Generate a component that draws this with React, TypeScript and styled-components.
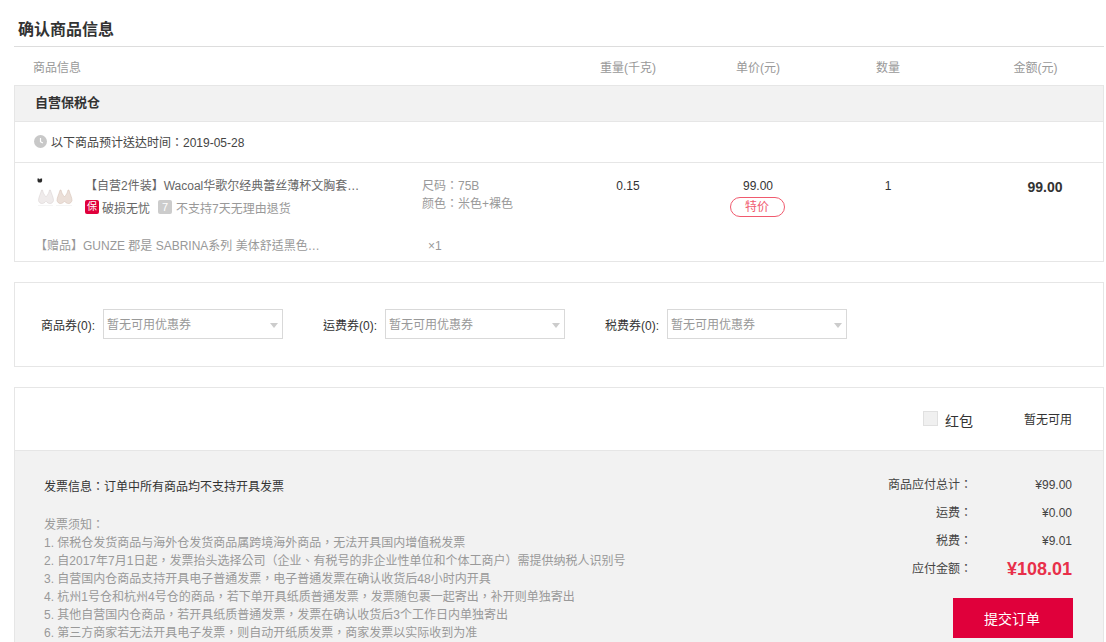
import React from "react";
import styled, { createGlobalStyle } from "styled-components";

const Global = createGlobalStyle`
  html, body { margin: 0; padding: 0; height: 100%; overflow: hidden; background: #fff; }
  body { font-family: "Liberation Sans", "Noto Sans CJK TC", sans-serif; font-size: 12px; color: #333; }
  * { box-sizing: border-box; }
`;

const Page = styled.main`
  width: 1090px;
  margin-left: 14px;
`;
const Title = styled.h2`
  margin: 0;
  height: 47px;
  padding: 19px 0 0 4px;
  font-size: 16px;
  line-height: 22px;
  font-weight: 700;
  color: #333;
  border-bottom: 1px solid #ddd;
`;
const Columns = styled.div`
  display: grid;
  grid-template-columns: 549px 130px 130px 130px 1fr;
  align-items: center;
`;
const HeadRow = styled(Columns)`
  height: 38px;
  color: #999;
`;
const HeadFirst = styled.span`
  padding-left: 19px;
`;
const HeadCell = styled.span<{ $shift?: number }>`
  text-align: center;
  padding-left: ${(p) => p.$shift ?? 0}px;
`;
const Card = styled.section`
  border: 1px solid #e6e6e6;
`;
const Warehouse = styled.div`
  height: 36px;
  background: #f2f2f2;
  padding-left: 20px;
  font-size: 13px;
  font-weight: 700;
  line-height: 33px;
  color: #333;
  border-bottom: 1px solid #e6e6e6;
`;
const Delivery = styled.div`
  height: 41px;
  display: flex;
  align-items: center;
  gap: 4px;
  padding: 0 0 1px 19px;
  color: #444;
  border-bottom: 1px solid #e6e6e6;
`;
const ProductRow = styled(Columns)`
  align-items: start;
  height: 62px;
  padding-top: 14px;
`;
const Goods = styled.div`
  display: flex;
  padding-left: 20px;
  height: 48px;
`;
const Thumb = styled.svg`
  width: 40px;
  height: 40px;
  flex: none;
  margin-top: -2px;
`;
const GoodsInfo = styled.div`
  width: 347px;
  padding-left: 10px;
`;
const GoodsName = styled.div`
  height: 18px;
  line-height: 18px;
  color: #666;
  white-space: nowrap;
`;
const TagRow = styled.div`
  display: flex;
  align-items: center;
  height: 14px;
  margin-top: 5px;
  color: #666;
`;
const SafeMark = styled.span`
  width: 14px;
  height: 14px;
  margin-right: 3px;
  border-radius: 2px;
  background: #e0003b;
  color: #fff;
  font-size: 10px;
  line-height: 14px;
  text-align: center;
`;
const NoReturnMark = styled.span`
  width: 14px;
  height: 14px;
  margin: 0 4px 0 8px;
  border-radius: 2px;
  background: #ccc;
  color: #fff;
  font-size: 11px;
  line-height: 14px;
  text-align: center;
`;
const Muted = styled.span`
  color: #999;
`;
const Sku = styled.div`
  color: #999;
  line-height: 18px;
  white-space: nowrap;
`;
const Value = styled.div`
  padding-right: 2px;
  text-align: center;
  line-height: 18px;
  color: #333;
`;
const SpecialTag = styled.div`
  width: 55px;
  height: 20px;
  margin: 2px auto 0;
  transform: translateX(-2px);
  border: 1px solid #f05a6e;
  border-radius: 10px;
  color: #f05a6e;
  line-height: 18px;
  text-align: center;
`;
const Total = styled.div`
  padding-left: 33px;
  text-align: center;
  font-size: 14px;
  font-weight: 700;
  line-height: 20px;
  color: #333;
`;
const GiftRow = styled.div`
  display: flex;
  height: 36px;
  padding: 12px 0 0 20px;
  line-height: 18px;
  color: #999;
`;
const GiftName = styled.div`
  width: 393px;
  white-space: nowrap;
`;
const CouponCard = styled(Card)`
  margin-top: 20px;
  height: 85px;
  display: flex;
  align-items: center;
  padding-left: 26px;
  padding-bottom: 1px;
`;
const Coupon = styled.div`
  width: 282px;
  display: flex;
  align-items: center;
  color: #333;
`;
const CouponLabel = styled.span`
  width: 62px;
  white-space: nowrap;
`;
const FakeSelect = styled.div`
  position: relative;
  width: 180px;
  height: 30px;
  padding-left: 3px;
  border: 1px solid #d9d9d9;
  line-height: 30px;
  color: #999;
  &::after {
    content: "";
    position: absolute;
    right: 4px;
    top: 13px;
    border-style: solid;
    border-width: 5px 4.5px 0;
    border-color: #ccc transparent transparent;
  }
`;
const SummaryCard = styled(Card)`
  margin-top: 20px;
`;
const PacketRow = styled.div`
  height: 63px;
  display: flex;
  align-items: center;
  justify-content: flex-end;
  padding: 0 31px 0 0;
  color: #333;
  border-bottom: 1px solid #e6e6e6;
`;
const Check = styled.span`
  width: 15px;
  height: 15px;
  margin-right: 7px;
  margin-bottom: 2px;
  border: 1px solid #e0e0e0;
  background: #f0f0f0;
`;
const PacketLabel = styled.span`
  width: 79px;
  font-size: 14px;
  line-height: 18px;
  padding-top: 4px;
`;
const PacketState = styled.span`
  margin-bottom: 2px;
`;
const Bottom = styled.div`
  display: flex;
  justify-content: space-between;
  height: 200px;
  background: #f2f2f2;
  padding: 25px 31px 0 29px;
`;
const InvoiceInfo = styled.div`
  line-height: 22px;
  color: #333;
`;
const Notes = styled.ol`
  list-style: none;
  margin: 18px 0 0;
  padding: 0;
  line-height: 18px;
  color: #999;
`;
const Side = styled.div`
  width: 190px;
  margin-top: -5px;
`;
const Line = styled.div`
  display: flex;
  justify-content: space-between;
  align-items: center;
  height: 28px;
  color: #444;
`;
const LineLabel = styled.span`
  width: 90px;
  margin-bottom: 4px;
  text-align: right;
  white-space: nowrap;
`;
const Grand = styled.span`
  font-size: 18px;
  font-weight: 700;
  color: #e8304a;
`;
const Submit = styled.button`
  display: block;
  width: 120px;
  height: 40px;
  margin: 15px -1px 0 auto;
  padding: 0 2px 0 0;
  border: 0;
  background: #e0003b;
  color: #fff;
  font: inherit;
  font-size: 14px;
`;

const notes = [
  "1. 保税仓发货商品与海外仓发货商品属跨境海外商品，无法开具国内增值税发票",
  "2. 自2017年7月1日起，发票抬头选择公司（企业、有税号的非企业性单位和个体工商户）需提供纳税人识别号",
  "3. 自营国内仓商品支持开具电子普通发票，电子普通发票在确认收货后48小时内开具",
  "4. 杭州1号仓和杭州4号仓的商品，若下单开具纸质普通发票，发票随包裹一起寄出，补开则单独寄出",
  "5. 其他自营国内仓商品，若开具纸质普通发票，发票在确认收货后3个工作日内单独寄出",
  "6. 第三方商家若无法开具电子发票，则自动开纸质发票，商家发票以实际收到为准",
];

const lines = [
  ["商品应付总计：", "¥99.00"],
  ["运费：", "¥0.00"],
  ["税费：", "¥9.01"],
];

const Clock = () => (
  <svg width="13" height="13" viewBox="0 0 13 13">
    <circle cx="6.5" cy="6.5" r="6.5" fill="#c8c8c8" />
    <path d="M6.5 3v3.7l2.4 1.4" fill="none" stroke="#fff" strokeWidth="1.2" />
  </svg>
);

const braShape =
  "M0 8.5C0 6 1.5 3.5 2.5 0L3.2 0C3.6 2.5 4.8 4 6 5.5C7.2 4 8.4 2.5 8.8 0L9.5 0C10.5 3.5 12 6 12 8.5C11 11.5 8 11.5 6 9C4 11.5 1 11.5 0 8.5Z";

const BraPhoto = () => (
  <Thumb viewBox="0 0 40 40">
    <path d="M2.5 3.5h1.5l.8 1 .8-1h1.5v2.8l-1 1.2H3.5l-1-1.2z" fill="#2b2b2b" />
    <g transform="translate(3.5 15) scale(1.25)">
      <path d={braShape} fill="#efebeb" stroke="#dcd5d5" strokeWidth="0.5" />
    </g>
    <g transform="translate(22 15) scale(1.25)">
      <path d={braShape} fill="#ebdfd8" stroke="#d9c6ba" strokeWidth="0.5" />
    </g>
    <rect x="3" y="30" width="15" height="1" fill="#f5f5f5" />
    <rect x="21" y="30" width="16" height="1" fill="#f5f5f5" />
  </Thumb>
);

export default function App() {
  return (
    <Page>
      <Global />
      <Title>确认商品信息</Title>
      <HeadRow>
        <HeadFirst>商品信息</HeadFirst>
        <HeadCell>重量(千克)</HeadCell>
        <HeadCell>单价(元)</HeadCell>
        <HeadCell>数量</HeadCell>
        <HeadCell $shift={14}>金额(元)</HeadCell>
      </HeadRow>
      <Card>
        <Warehouse>自营保税仓</Warehouse>
        <Delivery>
          <Clock />
          以下商品预计送达时间：2019-05-28
        </Delivery>
        <ProductRow>
          <Goods>
            <BraPhoto />
            <GoodsInfo>
              <GoodsName>【自营2件装】Wacoal华歌尔经典蕾丝薄杯文胸套…</GoodsName>
              <TagRow>
                <SafeMark>保</SafeMark>
                破损无忧
                <NoReturnMark>7</NoReturnMark>
                <Muted>不支持7天无理由退货</Muted>
              </TagRow>
            </GoodsInfo>
            <Sku>
              尺码：75B
              <br />
              颜色：米色+裸色
            </Sku>
          </Goods>
          <Value>0.15</Value>
          <div>
            <Value>99.00</Value>
            <SpecialTag>特价</SpecialTag>
          </div>
          <Value>1</Value>
          <Total>99.00</Total>
        </ProductRow>
        <GiftRow>
          <GiftName>【赠品】GUNZE 郡是 SABRINA系列 美体舒适黑色…</GiftName>
          ×1
        </GiftRow>
      </Card>
      <CouponCard>
        <Coupon>
          <CouponLabel>商品券(0):</CouponLabel>
          <FakeSelect>暂无可用优惠券</FakeSelect>
        </Coupon>
        <Coupon>
          <CouponLabel>运费券(0):</CouponLabel>
          <FakeSelect>暂无可用优惠券</FakeSelect>
        </Coupon>
        <Coupon>
          <CouponLabel>税费券(0):</CouponLabel>
          <FakeSelect>暂无可用优惠券</FakeSelect>
        </Coupon>
      </CouponCard>
      <SummaryCard>
        <PacketRow>
          <Check />
          <PacketLabel>红包</PacketLabel>
          <PacketState>暂无可用</PacketState>
        </PacketRow>
        <Bottom>
          <div>
            <InvoiceInfo>发票信息：订单中所有商品均不支持开具发票</InvoiceInfo>
            <Notes>
              <li>发票须知：</li>
              {notes.map((n) => (
                <li key={n}>{n}</li>
              ))}
            </Notes>
          </div>
          <Side>
            {lines.map(([label, value]) => (
              <Line key={label}>
                <LineLabel>{label}</LineLabel>
                <span>{value}</span>
              </Line>
            ))}
            <Line>
              <LineLabel>应付金额：</LineLabel>
              <Grand>¥108.01</Grand>
            </Line>
            <Submit>提交订单</Submit>
          </Side>
        </Bottom>
      </SummaryCard>
    </Page>
  );
}
